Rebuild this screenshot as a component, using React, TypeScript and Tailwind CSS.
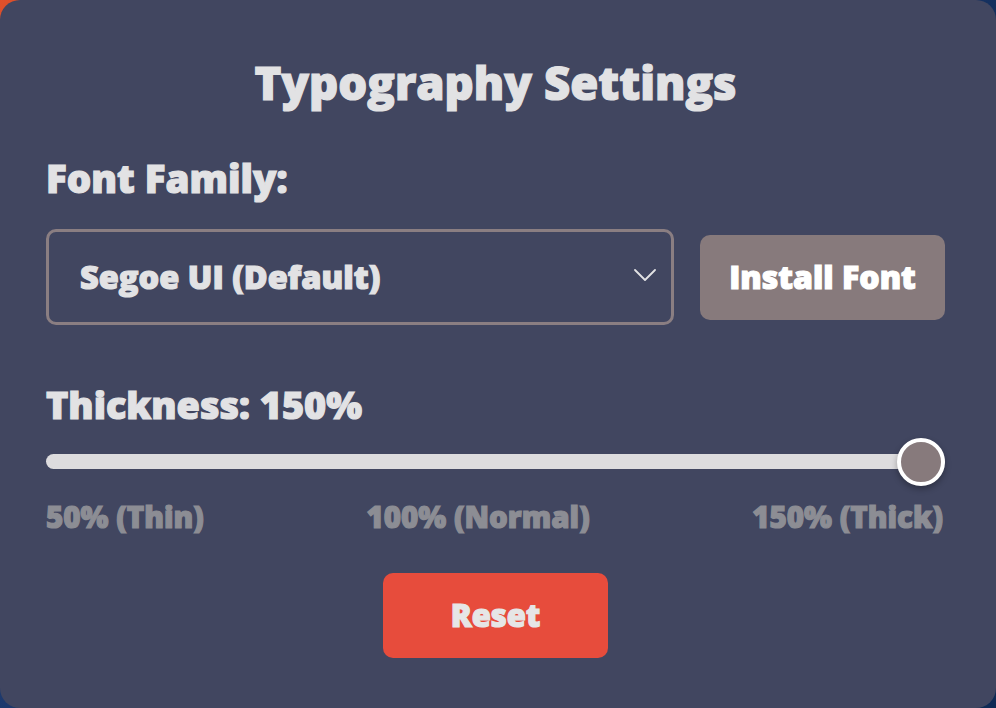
export default function App() {
  return (
    <div className="h-[708px] w-[996px] bg-[linear-gradient(135deg,#e0502a_0%,#1e3a6e_40%,#0f2a55_70%,#0f2a55_100%)]">
      <div
        className="flex h-full w-full flex-col rounded-[20px] bg-[#414660] pl-[46px] pr-[51px] text-[#e2e2e4] [-webkit-text-stroke:1.2px_currentColor]"
        style={{ fontFamily: '"Open Sans", "Noto Sans", sans-serif' }}
      >
        <h1 className="mt-[52px] text-center text-[45.5px] font-extrabold leading-[60px]">
          Typography Settings
        </h1>

        <div className="mt-[44px] text-[38.5px] font-extrabold leading-[44px]">Font Family:</div>

        <div className="mt-[29px] flex items-center gap-[26px]">
          <div className="flex h-[96px] w-[628px] items-center justify-between rounded-[10px] border-[3.5px] border-[#8a7e82] pl-[31px] pr-[15px]">
            <span className="text-[32.5px] font-extrabold">Segoe UI (Default)</span>
            <svg width="22" height="12" viewBox="0 0 22 12" fill="none" className="mt-[-4px]">
              <polyline points="1,1 11,11 21,1" stroke="#e2e2e4" strokeWidth="1.8" strokeLinecap="round" strokeLinejoin="round" />
            </svg>
          </div>
          <button className="h-[85px] flex-1 rounded-[10px] bg-[#877a7c] text-[32px] font-extrabold text-white">
            Install Font
          </button>
        </div>

        <div className="mt-[58px] text-[37.8px] font-extrabold leading-[44px]">Thickness: 150%</div>

        <div className="relative mt-[11px] h-[48px]">
          <div className="absolute left-0 right-0 top-[16px] h-[15px] rounded-full bg-[#dddcde]" />
          <div className="absolute right-0 top-0 h-[48px] w-[48px] rounded-full border-[4px] border-white bg-[#877a7c] shadow-[0_3px_6px_rgba(0,0,0,0.3)]" />
        </div>

        <div className="mt-[15px] flex justify-between pr-[2px] text-[29.5px] font-extrabold leading-[32px] text-[#8c8d94]">
          <span>50% (Thin)</span>
          <span>100% (Normal)</span>
          <span>150% (Thick)</span>
        </div>

        <div className="mt-[40px] flex justify-center">
          <button className="h-[85px] w-[225px] rounded-[10px] bg-[#e74c3c] text-[31px] font-extrabold text-[#e6e6e6]">
            Reset
          </button>
        </div>
      </div>
    </div>
  );
}
